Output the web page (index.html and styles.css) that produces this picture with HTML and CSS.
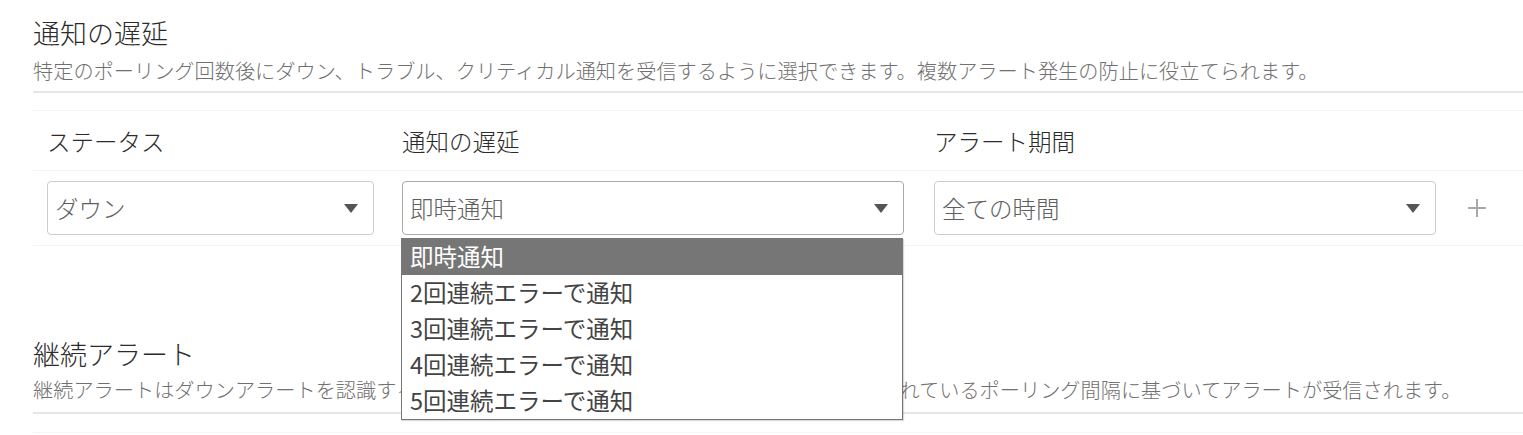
FILE: index.html
```html
<!DOCTYPE html>
<html lang="ja">
<head>
<meta charset="utf-8">
<title>通知の遅延</title>
<link rel="stylesheet" href="styles.css">
</head>
<body>
<div class="page">
  <section class="section">
    <h2 class="title">通知の遅延</h2>
    <p class="desc">特定のポーリング回数後にダウン、トラブル、クリティカル通知を受信するように選択できます。複数アラート発生の防止に役立てられます。</p>
    <div class="rule"></div>
  </section>

  <div class="table">
    <div class="grid thead">
      <div class="th">ステータス</div>
      <div class="th">通知の遅延</div>
      <div class="th">アラート期間</div>
      <div></div>
    </div>
    <div class="grid trow">
      <div class="cell">
        <div class="select sel-status"><span>ダウン</span><span class="caret"></span></div>
      </div>
      <div class="cell">
        <div class="select sel-wide open"><span>即時通知</span><span class="caret"></span>
          <ul class="dropdown">
            <li class="active">即時通知</li>
            <li>2回連続エラーで通知</li>
            <li>3回連続エラーで通知</li>
            <li>4回連続エラーで通知</li>
            <li>5回連続エラーで通知</li>
          </ul>
        </div>
      </div>
      <div class="cell">
        <div class="select sel-wide"><span>全ての時間</span><span class="caret"></span></div>
      </div>
      <div class="cell plus-cell">
        <svg class="plus" width="20" height="20" viewBox="0 0 20 20"><path d="M10 1V19M1 10H19" stroke="#a9a9a9" stroke-width="2" fill="none"/></svg>
      </div>
    </div>
  </div>

  <section class="section s2">
    <h2 class="title">継続アラート</h2>
    <p class="desc">継続アラートはダウンアラートを認識するまで、または問題が解決するまで、監視項目に設定されているポーリング間隔に基づいてアラートが受信されます。</p>
    <div class="rule"></div>
    <div class="faint"></div>
  </section>
</div>
</body>
</html>
```

FILE: styles.css
```css
* { box-sizing: border-box; }
html, body {
  margin: 0;
  padding: 0;
  background: #fff;
}
body {
  font-family: "Noto Sans CJK JP", "Noto Sans", sans-serif;
  font-weight: 300;
  color: #333;
  overflow: hidden;
}
.page {
  padding-left: 33px;
  width: 1523px;
}
.section {
  padding-top: 15px;
}
.title {
  margin: 0;
  font-size: 27px;
  line-height: 36px;
  font-weight: 300;
  color: #2b2b2b;
}
.desc {
  margin: 6px 0 0;
  font-size: 20.2px;
  line-height: 28px;
  color: #707070;
  white-space: nowrap;
}
.rule {
  margin-top: 6px;
  height: 2px;
  background: #e6e6e6;
}
.table {
  margin-top: 17px;
  border-top: 1px solid #f4f4f4;
}
.grid {
  display: grid;
  grid-template-columns: 355px 532px 533px 20px;
  padding-left: 14px;
  border-bottom: 1px solid #f4f4f4;
}
.thead {
  height: 60px;
  align-items: center;
}
.th {
  font-size: 23.5px;
  line-height: 32px;
  color: #2b2b2b;
}
.trow {
  height: 75px;
  align-items: center;
}
.cell {
  display: flex;
  align-items: center;
}
.select {
  position: relative;
  height: 54px;
  border: 1px solid #cccccc;
  border-radius: 4px;
  padding: 0 15px 0 7px;
  display: flex;
  align-items: center;
  justify-content: space-between;
  font-size: 23.5px;
  color: #5e5e5e;
  background: #fff;
}
.sel-status { width: 327px; }
.sel-wide { width: 502px; }
.open { border-color: #a9a9a9; }
.caret {
  width: 0;
  height: 0;
  border-left: 7px solid transparent;
  border-right: 7px solid transparent;
  border-top: 9px solid #555;
}
.dropdown {
  position: absolute;
  left: -2px;
  top: 56px;
  width: 502px;
  margin: 0;
  padding: 0;
  list-style: none;
  border: 1px solid #767676;
  background: #fff;
  z-index: 10;
  box-shadow: 1px 1px 1px rgba(0,0,0,0.15);
}
.dropdown li {
  height: 36px;
  line-height: 34px;
  padding-left: 8px;
  font-size: 23.5px;
  font-weight: 400;
  color: #444;
  white-space: nowrap;
}
.dropdown li.active {
  background: #767676;
  color: #fff;
}
.plus-cell {
  justify-content: center;
}
.s2 {
  padding-top: 90px;
}
.s2 .desc {
  margin-top: 4px;
}
.s2 .rule {
  margin-top: 8px;
}
.faint {
  margin-top: 18px;
  height: 1px;
  background: #f4f4f4;
}
```
